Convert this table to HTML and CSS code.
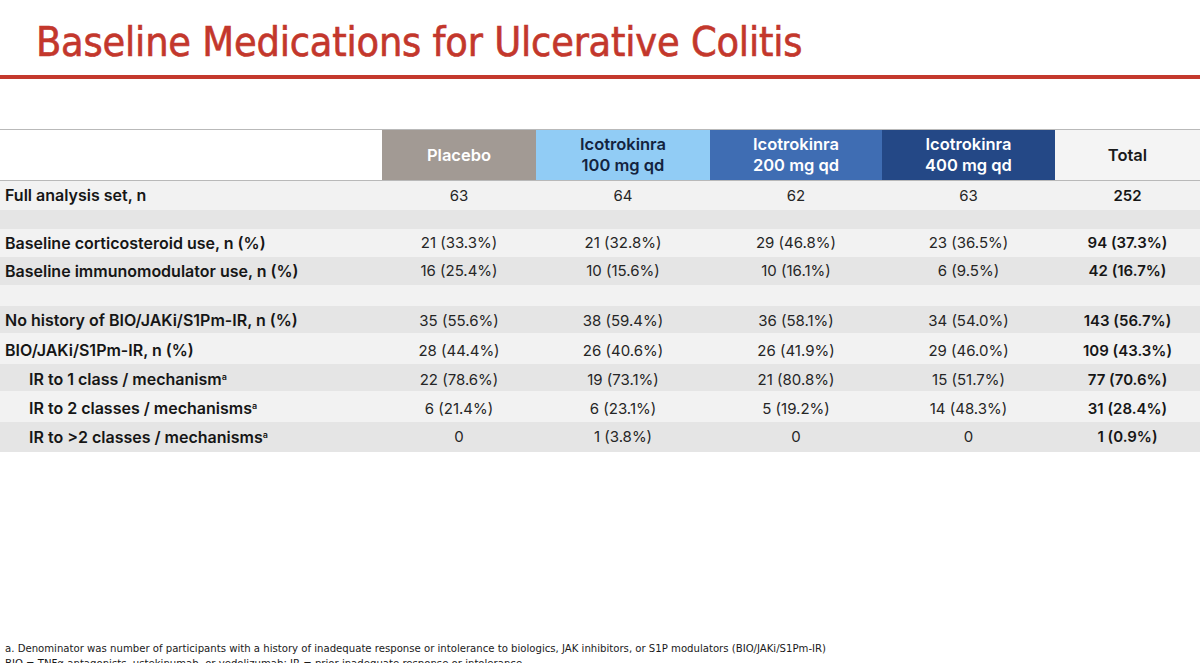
FILE: index.html
```html
<!DOCTYPE html>
<html lang="en">
<head>
<meta charset="utf-8">
<title>Baseline Medications for Ulcerative Colitis</title>
<link rel="stylesheet" href="styles.css">
</head>
<body>
<div class="slide">
  <header class="title-bar">
    <h1 class="title">Baseline Medications for Ulcerative Colitis</h1>
  </header>
  <div class="rule"></div>
  <table class="data">
    <colgroup>
      <col class="c-label"><col class="c-pbo"><col class="c-100"><col class="c-200"><col class="c-400"><col class="c-total">
    </colgroup>
    <thead>
      <tr class="head">
        <th class="h-label"></th>
        <th class="h-pbo">Placebo</th>
        <th class="h-100">Icotrokinra<br>100 mg qd</th>
        <th class="h-200">Icotrokinra<br>200 mg qd</th>
        <th class="h-400">Icotrokinra<br>400 mg qd</th>
        <th class="h-total">Total</th>
      </tr>
    </thead>
    <tbody>
      <tr class="light r-full"><td class="lab">Full analysis set, n</td><td>63</td><td>64</td><td>62</td><td>63</td><td class="tot">252</td></tr>
      <tr class="dark r-gap1"><td></td><td></td><td></td><td></td><td></td><td></td></tr>
      <tr class="light r-cort"><td class="lab">Baseline corticosteroid use, n (%)</td><td>21 (33.3%)</td><td>21 (32.8%)</td><td>29 (46.8%)</td><td>23 (36.5%)</td><td class="tot">94 (37.3%)</td></tr>
      <tr class="dark r-imm"><td class="lab">Baseline immunomodulator use, n (%)</td><td>16 (25.4%)</td><td>10 (15.6%)</td><td>10 (16.1%)</td><td>6 (9.5%)</td><td class="tot">42 (16.7%)</td></tr>
      <tr class="light r-gap2"><td></td><td></td><td></td><td></td><td></td><td></td></tr>
      <tr class="dark r-nohist"><td class="lab">No history of BIO/JAKi/S1Pm-IR, n (%)</td><td>35 (55.6%)</td><td>38 (59.4%)</td><td>36 (58.1%)</td><td>34 (54.0%)</td><td class="tot">143 (56.7%)</td></tr>
      <tr class="light r-bio"><td class="lab">BIO/JAKi/S1Pm-IR, n (%)</td><td>28 (44.4%)</td><td>26 (40.6%)</td><td>26 (41.9%)</td><td>29 (46.0%)</td><td class="tot">109 (43.3%)</td></tr>
      <tr class="dark r-ir1"><td class="lab sub">IR to 1 class / mechanism<sup>a</sup></td><td>22 (78.6%)</td><td>19 (73.1%)</td><td>21 (80.8%)</td><td>15 (51.7%)</td><td class="tot">77 (70.6%)</td></tr>
      <tr class="light r-ir2"><td class="lab sub">IR to 2 classes / mechanisms<sup>a</sup></td><td>6 (21.4%)</td><td>6 (23.1%)</td><td>5 (19.2%)</td><td>14 (48.3%)</td><td class="tot">31 (28.4%)</td></tr>
      <tr class="dark r-ir3"><td class="lab sub">IR to &gt;2 classes / mechanisms<sup>a</sup></td><td>0</td><td>1 (3.8%)</td><td>0</td><td>0</td><td class="tot">1 (0.9%)</td></tr>
    </tbody>
  </table>
  <footer class="notes">
    <p>a. Denominator was number of participants with a history of inadequate response or intolerance to biologics, JAK inhibitors, or S1P modulators (BIO/JAKi/S1Pm-IR)</p>
    <p>BIO = TNFα antagonists, ustekinumab, or vedolizumab; IR = prior inadequate response or intolerance.</p>
  </footer>
</div>
</body>
</html>
```
FILE: styles.css
```css
* { box-sizing: border-box; }
html, body { margin: 0; padding: 0; background: #ffffff; }
body { font-family: Inter, Roboto, "Liberation Sans", sans-serif; color: #1c1c1c; }

.slide {
  width: 1200px;
  height: 663px;
  overflow: hidden;
  display: flex;
  flex-direction: column;
}

.title-bar { height: 75px; padding: 19px 0 0 36px; flex: none; }
.title {
  margin: 0;
  font-family: "DejaVu Sans Condensed", "Liberation Sans", sans-serif;
  font-weight: 400;
  font-size: 41px;
  line-height: 46px;
  color: #c3372c;
  letter-spacing: -0.2px;
  -webkit-text-stroke: 0.6px #c3372c;
}
.rule { height: 4px; background: #c4392d; flex: none; }

.data {
  margin-top: 50px;
  width: 1200px;
  border-collapse: collapse;
  table-layout: fixed;
  border-top: 1px solid #b9b9b9;
  font-size: 15px;
  flex: none;
}
.c-label { width: 382px; }
.c-pbo { width: 154px; }
.c-100 { width: 174px; }
.c-200 { width: 172px; }
.c-400 { width: 173px; }
.c-total { width: 145px; }

.head th {
  height: 51px;
  padding: 0;
  font-weight: 600;
  font-size: 16.5px;
  line-height: 21px;
  text-align: center;
  vertical-align: middle;
  border-bottom: 1px solid #b9b9b9;
}
.h-label { background: #ffffff; }
.h-pbo { background: #a29a94; color: #ffffff; }
.h-100 { background: #91ccf5; color: #13233f; }
.h-200 { background: #3f6db3; color: #ffffff; }
.h-400 { background: #244886; color: #ffffff; }
.h-total { background: #f4f4f4; color: #1a1a1a; font-size: 19px; }

.data td {
  padding: 0;
  text-align: center;
  vertical-align: middle;
  white-space: nowrap;
  color: #262626;
  font-weight: 400;
}
.data td.lab { text-align: left; padding-left: 5px; font-weight: 600; font-size: 16px; color: #161616; }
.data td.sub { padding-left: 29px; }
.data td.tot { font-weight: 600; color: #161616; }
.lab sup { font-size: 9px; vertical-align: 5px; line-height: 0; }

.light td { background: #f2f2f2; }
.dark td { background: #e5e5e5; }

.r-full td { height: 29px; }
.r-gap1 td { height: 19px; }
.r-cort td { height: 28px; }
.r-imm td { height: 28px; }
.r-gap2 td { height: 21px; }
.r-nohist td { height: 27px; padding-top: 2px; }
.r-bio td { height: 31px; padding-top: 4px; }
.r-ir1 td { height: 27px; padding-top: 4px; }
.r-ir2 td { height: 31px; padding-top: 4px; }
.r-ir3 td { height: 30px; }

.notes {
  margin-top: auto;
  padding: 0 0 0 5px;
  font-family: "DejaVu Sans Condensed", "Liberation Sans", sans-serif;
  font-size: 11.25px;
  line-height: 15px;
  color: #1a1a1a;
  height: 22px;
  flex: none;
}
.notes p { margin: 0; white-space: nowrap; }
```
